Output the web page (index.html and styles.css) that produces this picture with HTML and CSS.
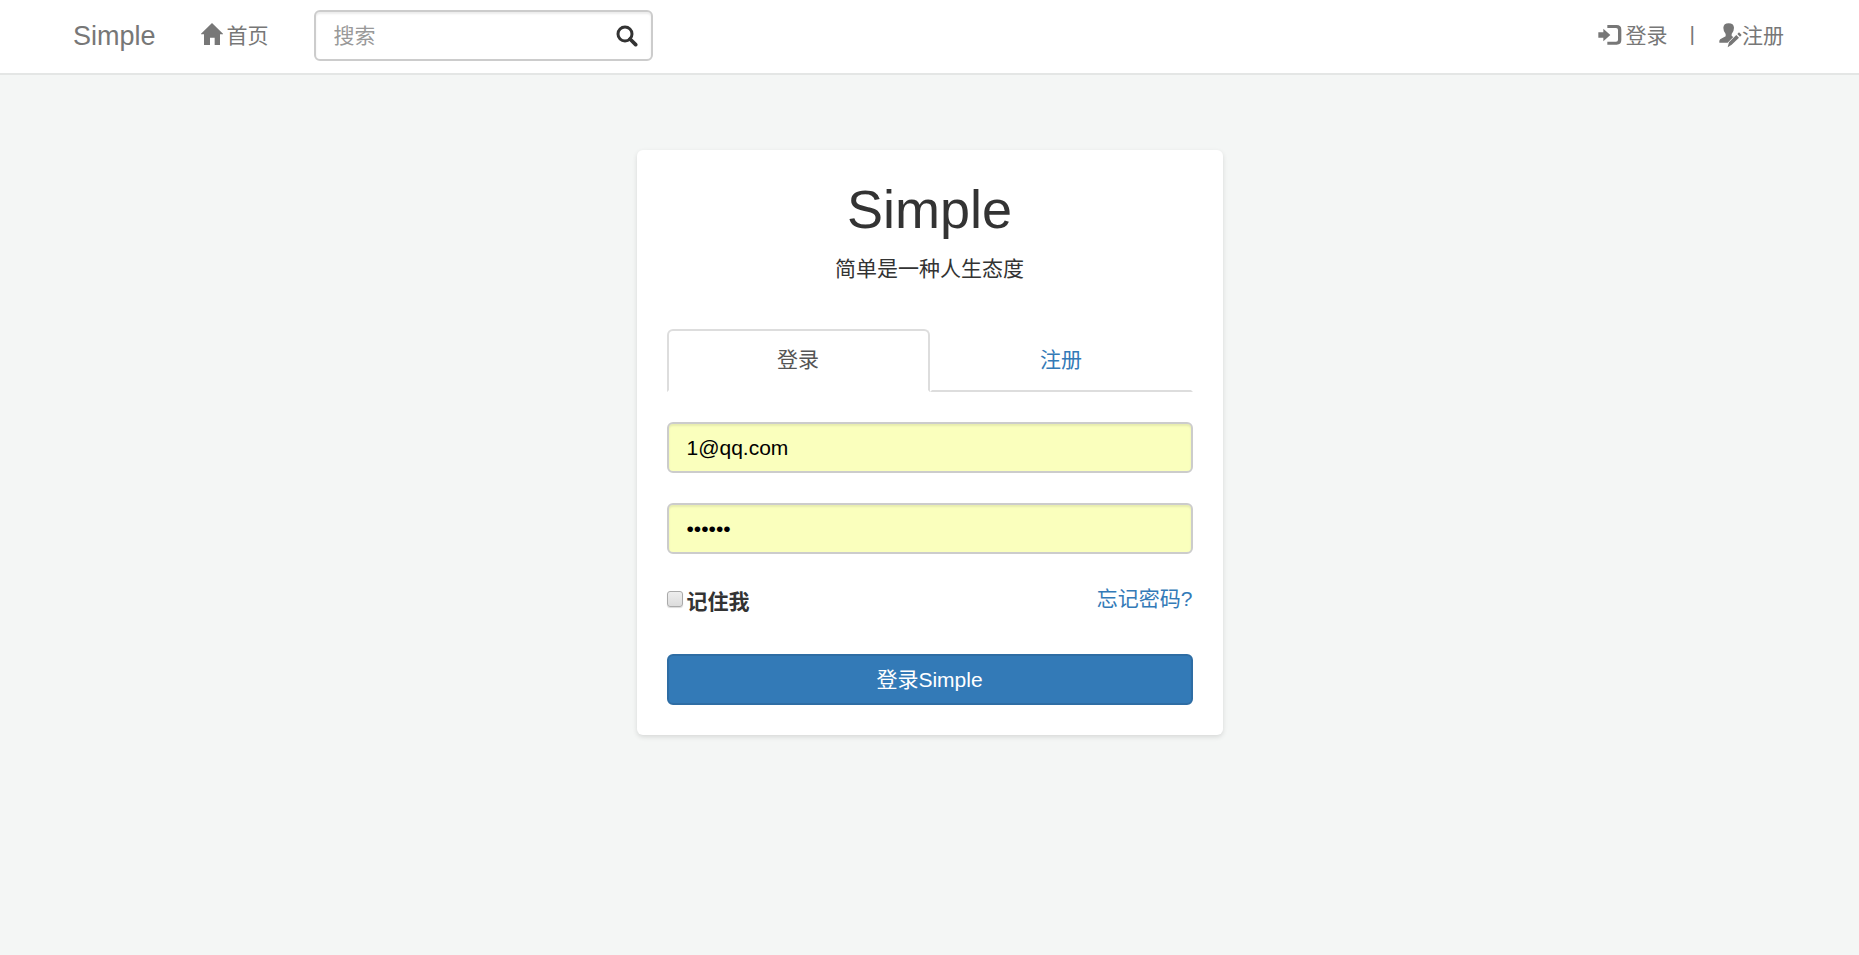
FILE: index.html
```html
<!DOCTYPE html>
<html lang="zh-CN">
<head>
<meta charset="utf-8">
<meta name="viewport" content="width=device-width, initial-scale=1">
<title>Simple</title>
<link rel="stylesheet" href="styles.css">
</head>
<body>
<header class="navbar">
  <nav class="container">
    <a class="brand" href="#">Simple</a>
    <a class="nav-link nav-home" href="#">
      <svg class="icon" viewBox="0 0 66 66" aria-hidden="true"><path d="M33 0 66 32v2h-9v32H41V44H27v22H9V34H0v-2z"/></svg>
      <span>首页</span>
    </a>
    <form class="search" role="search">
      <input class="control" type="search" placeholder="搜索" aria-label="搜索">
      <button class="search-button" type="button" aria-label="搜索">
        <svg class="icon icon-search" viewBox="0 0 66 66" aria-hidden="true"><circle cx="27" cy="27" r="21" fill="none" stroke="currentColor" stroke-width="9"/><path d="m42 42 17 17" stroke="currentColor" stroke-width="11" stroke-linecap="round"/></svg>
      </button>
    </form>
    <div class="account">
      <a class="nav-link" href="#">
        <svg class="icon icon-login" viewBox="0 0 72 66" aria-hidden="true"><path d="M1 25h15V14l21 19-21 19V41H1zM28 3h28q14 0 14 14v31q0 14-14 14H28v-9h26q6 0 6-6V18q0-6-6-6H28z"/></svg>
        <span>登录</span>
      </a>
      <span class="divider">|</span>
      <a class="nav-link nav-register" href="#">
        <svg class="icon icon-register" viewBox="0 0 69 75" aria-hidden="true"><path d="M29 1q15 0 16 13 0 11-7 19v6l5 3-17 17H1v-6q1-5 8-7l11-6v-7q-7-8-7-19Q14 1 29 1z"/><path d="m60 28 8 8-5 5-8-8zM52 36l8 8-22 21-12 8 4-15z"/></svg>
        <span>注册</span>
      </a>
    </div>
  </nav>
</header>
<main class="card">
  <h1 class="title">Simple</h1>
  <p class="tagline">简单是一种人生态度</p>
  <nav class="tabs">
    <a class="tab tab-active" href="#" aria-current="page">登录</a>
    <a class="tab" href="#">注册</a>
  </nav>
  <form class="login-form">
    <input class="control filled" type="email" value="1@qq.com" aria-label="邮箱">
    <input class="control filled" type="password" value="123456" aria-label="密码">
    <div class="options">
      <label class="remember"><input class="checkbox" type="checkbox"><span>记住我</span></label>
      <a class="link" href="#">忘记密码?</a>
    </div>
    <button class="submit" type="button">登录Simple</button>
  </form>
</main>
</body>
</html>
```
FILE: styles.css
```css
* {
  box-sizing: border-box;
}

body {
  margin: 0;
  background: #f4f6f5;
  color: #333;
  font: 21px/30px "Liberation Sans", "Noto Sans CJK SC", sans-serif;
}

a {
  color: #337ab7;
  text-decoration: none;
}

input,
button {
  font: inherit;
}

.navbar {
  background: #fff;
  border-bottom: 2px solid #e4e6e5;
}

.container {
  display: flex;
  align-items: center;
  max-width: 1757px;
  margin: 0 auto;
  padding: 10px 24px 12px 22px;
}

.brand {
  color: #777;
  font-size: 27px;
}

.nav-link {
  display: flex;
  align-items: center;
  gap: 4px;
  color: #777;
}

.nav-home {
  margin: 0 45px;
}

.nav-register {
  gap: 0;
}

.icon {
  display: block;
  width: 22px;
  height: 22px;
  margin-bottom: 4px;
  fill: currentColor;
}

.icon-login {
  width: 24px;
  margin-bottom: 2px;
}

.icon-search {
  margin-bottom: 0;
}

.icon-register {
  width: 23px;
  height: 25px;
  margin-bottom: 0;
}

.search {
  position: relative;
  width: 339px;
}

.control {
  display: block;
  width: 100%;
  height: 51px;
  padding: 8px 18px;
  border: 2px solid #ccc;
  border-radius: 6px;
  background: #fff;
  box-shadow: inset 0 2px 2px rgba(0, 0, 0, 0.08);
  color: #000;
  outline: 0;
  appearance: none;
}

.control::placeholder {
  color: #999;
  opacity: 1;
}

.filled {
  background: #faffbd;
}

.search-button {
  position: absolute;
  top: 0;
  right: 0;
  display: grid;
  place-items: center;
  width: 51px;
  height: 51px;
  padding: 0;
  border: 0;
  background: none;
  color: #333;
}

.account {
  display: flex;
  align-items: center;
  margin-left: auto;
}

.divider {
  margin: 0 24px 4px 22px;
  color: #777;
}

.card {
  width: 586px;
  max-width: 100%;
  margin: 75px auto 30px;
  padding: 29px 30px 30px;
  border-radius: 6px;
  background: #fff;
  box-shadow: 0 2px 5px rgba(0, 0, 0, 0.12);
}

.title {
  margin: 0 0 15px;
  font-size: 54px;
  font-weight: 400;
  line-height: 60px;
  text-align: center;
}

.tagline {
  margin: 0 0 45px;
  text-align: center;
}

.tabs {
  display: flex;
  margin-bottom: 30px;
}

.tab {
  flex: 1;
  padding: 14px 15px 15px;
  border: 2px solid transparent;
  border-bottom-color: #ddd;
  border-radius: 6px 6px 0 0;
  text-align: center;
}

.tab-active {
  border-color: #ddd;
  border-bottom-color: transparent;
  color: #555;
}

.login-form {
  display: grid;
  gap: 30px;
}

.options {
  display: flex;
  justify-content: space-between;
  height: 40px;
}

.remember {
  display: flex;
  align-items: center;
  gap: 4px;
  height: 36px;
  font-weight: 700;
}

.checkbox {
  width: 16px;
  height: 16px;
  margin: 0 0 6px;
  border: 1px solid #aaa;
  border-radius: 3px;
  background: linear-gradient(#eee, #dcdcdc);
  box-shadow: 0 1px 1px rgba(0, 0, 0, 0.15);
  appearance: none;
}

.submit {
  height: 51px;
  padding: 8px 18px;
  border: 2px solid #2e6da4;
  border-radius: 6px;
  background: #337ab7;
  color: #fff;
}
```
